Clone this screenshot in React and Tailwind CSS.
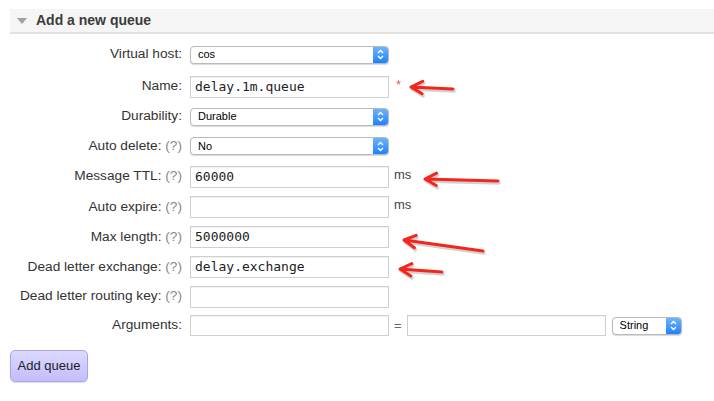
const sans = { fontFamily: '"Liberation Sans", Arial, sans-serif' };

const Help = () => <span className="text-[#888]"> (?)</span>;

const Chevrons = () => (
  <svg width="7" height="11" viewBox="0 0 7 11" fill="none" stroke="white" strokeWidth="1.4">
    <path d="M1 4 L3.5 1.5 L6 4" />
    <path d="M1 7 L3.5 9.5 L6 7" />
  </svg>
);

const FakeSelect = ({ value, width = 'w-[199px]' }) => (
  <div className={`${width} h-[18px] flex rounded-[4px] border border-[#b9b9b9] bg-white shadow-[0_1px_1px_rgba(0,0,0,0.15)] overflow-hidden`}>
    <div className="flex-1 flex items-center pl-[7px] text-[11px] text-black">{value}</div>
    <div className="w-[15px] flex items-center justify-center bg-gradient-to-b from-[#6cb3fa] to-[#1a82fb]">
      <Chevrons />
    </div>
  </div>
);

const TextBox = ({ value, width = 'w-[199px]', height = 'h-[22px]' }) => (
  <div
    className={`${width} ${height} border border-[#cfcfcf] bg-white flex items-center pl-[4px] text-[13px] text-[#222] shadow-[inset_0_1px_1px_rgba(0,0,0,0.06)]`}
    style={{ fontFamily: '"DejaVu Sans Mono", monospace' }}
  >
    {value}
  </div>
);

const Row = ({ h, label, help, children }) => (
  <div className={`flex items-center ${h}`}>
    <div className="w-[180px] text-right text-[13.7px] text-[#333] pr-[8px] whitespace-nowrap">
      {label}
      {help && <Help />}
    </div>
    <div className="flex items-center">{children}</div>
  </div>
);

const Arrow = ({ x1, y1, x2, y2 }) => {
  // arrow from tail (x2,y2) to tip (x1,y1)
  const a = Math.atan2(y2 - y1, x2 - x1);
  const len = 13;
  const spread = 0.5;
  const p1 = [x1 + len * Math.cos(a + spread), y1 + len * Math.sin(a + spread)];
  const p2 = [x1 + len * Math.cos(a - spread), y1 + len * Math.sin(a - spread)];
  const d = `M${x2} ${y2} L${x1} ${y1} M${p1[0]} ${p1[1]} L${x1} ${y1} L${p2[0]} ${p2[1]}`;
  return (
    <g>
      <path d={d} stroke="rgba(0,0,0,0.18)" strokeWidth="3.5" strokeLinecap="round" strokeLinejoin="round" fill="none" transform="translate(1,2)" />
      <path d={d} stroke="#f2261b" strokeWidth="3" strokeLinecap="round" strokeLinejoin="round" fill="none" />
    </g>
  );
};

export default function App() {
  return (
    <div className="relative w-[714px] h-[401px] bg-white overflow-hidden" style={sans}>
      <div className="pt-[9px] pl-[10px]">
        <div className="h-[25px] bg-[#f5f5f5] border-b-2 border-[#e2e2e2] flex items-center pl-[7px]">
          <svg width="10" height="6" viewBox="0 0 10 6" className="mr-[9px]">
            <path d="M0 0 H10 L5 6 Z" fill="#a0a0a0" />
          </svg>
          <span className="text-[14px] font-bold text-[#3c3c3c]">Add a new queue</span>
        </div>
      </div>

      <div className="pl-[10px] mt-[4px]">
        <Row h="h-[33px]" label="Virtual host:">
          <FakeSelect value="cos" />
        </Row>
        <Row h="h-[31px]" label="Name:">
          <TextBox value="delay.1m.queue" />
          <span className="ml-[7px] text-[13px] text-[#ee5b5b] -mt-[3px]">*</span>
        </Row>
        <Row h="h-[29px]" label="Durability:">
          <FakeSelect value="Durable" />
        </Row>
        <Row h="h-[30px]" label="Auto delete:" help>
          <FakeSelect value="No" />
        </Row>
        <Row h="h-[31px]" label="Message TTL:" help>
          <TextBox value="60000" />
          <span className="ml-[5px] text-[13px] text-[#444] -mt-[4px]">ms</span>
        </Row>
        <Row h="h-[30px]" label="Auto expire:" help>
          <TextBox value="" />
          <span className="ml-[5px] text-[13px] text-[#444] -mt-[4px]">ms</span>
        </Row>
        <Row h="h-[30px]" label="Max length:" help>
          <TextBox value="5000000" />
        </Row>
        <Row h="h-[30px]" label="Dead letter exchange:" help>
          <TextBox value="delay.exchange" />
        </Row>
        <Row h="h-[29px]" label="Dead letter routing key:" help>
          <TextBox value="" />
        </Row>
        <Row h="h-[29px]" label="Arguments:">
          <TextBox value="" height="h-[21px]" />
          <span className="mx-[5px] text-[13px] text-[#666]">=</span>
          <TextBox value="" height="h-[21px]" />
          <div className="ml-[6px]">
            <FakeSelect value="String" width="w-[70px]" />
          </div>
        </Row>

        <button className="mt-[10px] h-[32px] w-[78px] rounded-[5px] border border-[#a9a3ee] bg-gradient-to-b from-[#dcd9ff] to-[#c3bdfd] text-[13px] text-[#222] shadow-[0_1px_1px_rgba(0,0,0,0.12)]">
          Add queue
        </button>
      </div>

      <svg className="absolute inset-0 pointer-events-none" width="714" height="401">
        <Arrow x1={411} y1={87} x2={453} y2={89} />
        <Arrow x1={425} y1={179} x2={498} y2={181} />
        <Arrow x1={404} y1={240} x2={483} y2={251} />
        <Arrow x1={400} y1={269} x2={442} y2={272} />
      </svg>
    </div>
  );
}
